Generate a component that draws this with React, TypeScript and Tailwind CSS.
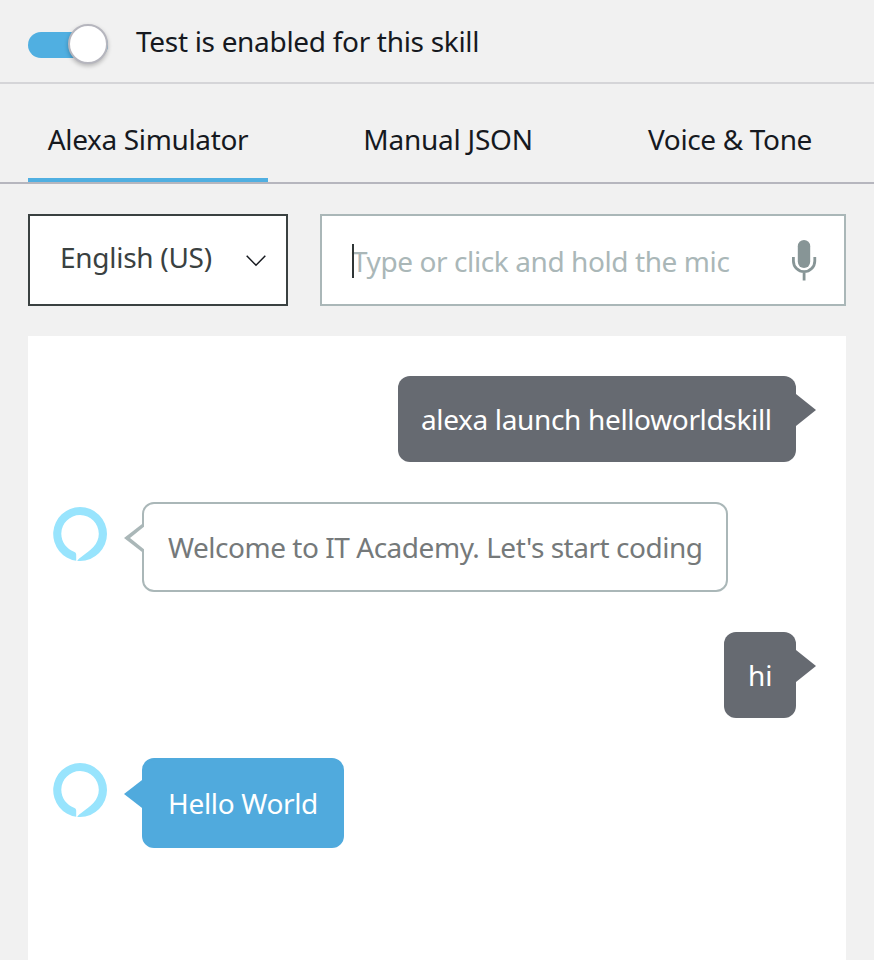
import type { ReactNode } from "react";

function Toggle() {
  return (
    <div className="relative h-10 w-20 shrink-0">
      <div className="mt-2 h-[26px] w-full rounded-full bg-[#50afe1]" />
      <div className="absolute right-0 top-0 size-10 rounded-full border-2 border-[#b6b6be] bg-white shadow-[0_2px_4px_rgba(0,0,0,0.25)]" />
    </div>
  );
}

function AlexaLogo() {
  return (
    <svg className="mt-[5px] size-[54px] shrink-0" viewBox="0 0 54 54">
      <path
        fill="#98e4fd"
        d="M27 0A27 27 0 0 0 23.2 53.7V47.6C23.2 46.2 22.3 45.1 21 44.7C13.8 42.2 8.2 35.2 8.3 26.6C8.5 16.3 16.9 8.1 27.1 8.1C37.4 8.1 45.8 16.5 45.8 26.8C45.8 31.8 43.8 36.4 40.6 39.8C37.2 43.8 28.5 49.3 24.6 53.2C24.4 53.5 24.3 53.8 24.6 53.9Q26 54 27 54A27 27 0 0 0 27 0Z"
      />
    </svg>
  );
}

function UserMessage({ className, children }: { className: string; children: ReactNode }) {
  return (
    <div className="flex justify-end">
      <div className={`h-[86px] rounded-xl bg-[#666a71] pt-[24px] leading-[38px] text-white ${className}`}>{children}</div>
      <svg className="mt-[18px] h-8 w-5 shrink-0" viewBox="0 0 20 32">
        <path d="M0 0L20 16L0 32Z" fill="#666a71" />
      </svg>
    </div>
  );
}

function AlexaMessage({ filled, className, children }: { filled?: boolean; className: string; children: ReactNode }) {
  return (
    <div className="flex">
      <AlexaLogo />
      <svg className="z-10 -mr-0.5 ml-[17px] mt-[20px] h-8 w-5 shrink-0" viewBox="0 0 20 32">
        {filled ? (
          <path d="M0 16L20 0.5V31.5Z" fill="#50aadd" />
        ) : (
          <>
            <path d="M20 0.5L0 16L20 31.5Z" fill="#aab7b8" />
            <path d="M20 4.8L6 16L20 27.2Z" fill="#fff" />
          </>
        )}
      </svg>
      <div
        className={`h-[90px] rounded-xl border-2 pt-[24px] leading-[38px] ${
          filled ? "border-[#50aadd] bg-[#50aadd] text-white" : "border-[#aab7b8] bg-white text-[#75797a]"
        } ${className}`}
      >
        {children}
      </div>
    </div>
  );
}

export default function App() {
  return (
    <div className="flex h-[960px] w-[874px] flex-col overflow-hidden whitespace-nowrap bg-[#f1f1f1] font-['Noto_Sans','Open_Sans',sans-serif] text-[28px] leading-[38px] text-[#16191f]">
      <header className="flex h-[84px] shrink-0 border-b-2 border-[#d5d5d8] pl-7 pt-6">
        <Toggle />
        <h1 className="-mt-0.5 ml-7 tracking-[-0.31px]">Test is enabled for this skill</h1>
      </header>

      <nav className="flex h-[100px] shrink-0 gap-[75px] border-b-2 border-[#b6b6be] pl-7">
        <button className="w-60 border-b-4 border-[#50afe1] pt-4 tracking-[-0.36px]">
          <span>Alexa Simulator</span>
        </button>
        <button className="w-[210px] pt-3 tracking-[-0.25px]">
          <span>Manual JSON</span>
        </button>
        <button className="w-[204px] pt-3 tracking-[-0.35px]">
          <span>Voice &amp; Tone</span>
        </button>
      </nav>

      <div className="flex shrink-0 gap-8 px-7 pb-[30px] pt-[30px]">
        <button className="flex h-[92px] w-[260px] justify-between border-2 border-[#3a4141] bg-white pl-[30px] pr-5 pt-[22px] text-left text-[#3a4141]">
          <span className="tracking-[-0.28px]">English (US)</span>
          <svg className="mt-[17px] h-3 w-5" viewBox="0 0 20 12">
            <path d="M0.7 0.8L10 10.2L19.3 0.8" fill="none" stroke="#16191f" strokeWidth="1.5" />
          </svg>
        </button>
        <div className="flex h-[92px] w-[526px] border-2 border-[#aab7b8] bg-white pl-[30px]">
          <span className="z-10 -mr-0.5 mt-7 h-[34px] w-0.5 bg-[#2f3636]" />
          <span className="mt-[26px] w-[440px] tracking-[-0.41px] text-[#aab7b8]">Type or click and hold the mic</span>
          <svg className="mt-6 h-[41px] w-[25px]" viewBox="0 0 25 41">
            <rect x="5.8" y="0" width="12.4" height="28" rx="6.2" fill="#879596" />
            <path d="M1.4 17V21A10.7 10.7 0 0 0 22.8 21V17M12.1 32V40.5" fill="none" stroke="#879596" strokeWidth="2.8" />
          </svg>
        </div>
      </div>

      <main className="mx-7 flex flex-1 flex-col gap-10 bg-white pl-[25px] pr-[30px] pt-10">
        <UserMessage className="w-[398px] pl-[23px] tracking-[-0.35px]">alexa launch helloworldskill</UserMessage>
        <AlexaMessage className="w-[586px] pl-6 tracking-[-0.47px]">Welcome to IT Academy. Let's start coding</AlexaMessage>
        <UserMessage className="w-[72px] pl-6">hi</UserMessage>
        <AlexaMessage filled className="w-[202px] pl-6 tracking-[-0.33px]">
          Hello World
        </AlexaMessage>
      </main>
    </div>
  );
}
